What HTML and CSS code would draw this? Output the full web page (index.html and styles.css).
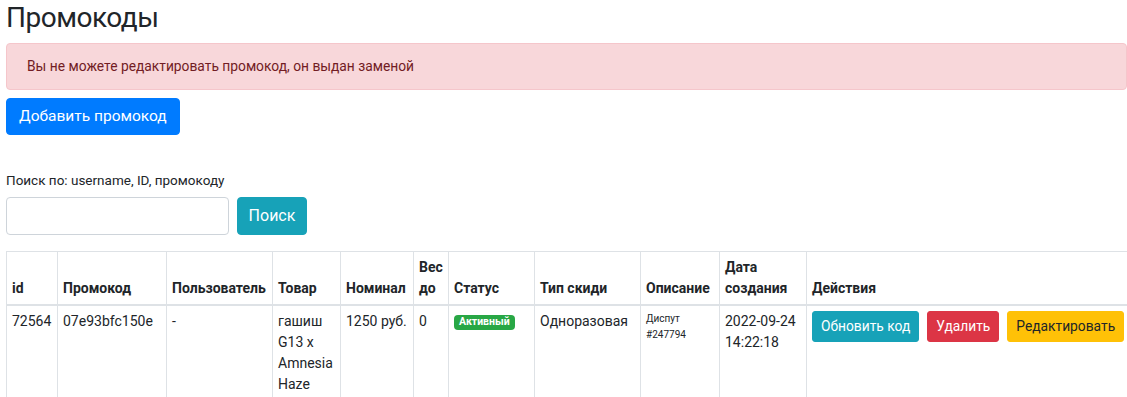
FILE: index.html
```html
<!DOCTYPE html>
<html lang="ru">
<head>
  <meta charset="UTF-8" />
  <title>Промокоды</title>
  <link rel="stylesheet" href="styles.css">
</head>
<body>
  <div class="page">
    <h1 class="page-title">Промокоды</h1>
    <div class="alert alert-danger">Вы не можете редактировать промокод, он выдан заменой</div>
    <button class="btn btn-primary btn-add" type="button">Добавить промокод</button>

    <form class="search" onsubmit="return false">
      <label class="search-label" for="q">Поиск по: username, ID, промокоду</label>
      <div class="search-row">
        <input type="text" id="q" class="search-input" />
        <button class="btn btn-info btn-search" type="submit">Поиск</button>
      </div>
    </form>

    <table class="promo-table">
      <colgroup>
        <col class="c-id"><col class="c-code"><col class="c-user"><col class="c-item">
        <col class="c-sum"><col class="c-weight"><col class="c-status"><col class="c-type">
        <col class="c-desc"><col class="c-date"><col>
      </colgroup>
      <thead>
        <tr>
          <th>id</th>
          <th>Промокод</th>
          <th>Пользователь</th>
          <th>Товар</th>
          <th>Номинал</th>
          <th>Вес<br>до</th>
          <th>Статус</th>
          <th>Тип скиди</th>
          <th>Описание</th>
          <th>Дата<br>создания</th>
          <th>Действия</th>
        </tr>
      </thead>
      <tbody>
        <tr>
          <td>72564</td>
          <td>07e93bfc150e</td>
          <td>-</td>
          <td class="wrap">гашиш G13 x Amnesia Haze</td>
          <td>1250 руб.</td>
          <td>0</td>
          <td><span class="badge badge-success">Активный</span></td>
          <td>Одноразовая</td>
          <td><small>Диспут<br>#247794</small></td>
          <td>2022-09-24<br>14:22:18</td>
          <td>
            <div class="actions">
              <button class="btn btn-sm btn-info" type="button">Обновить код</button>
              <button class="btn btn-sm btn-danger" type="button">Удалить</button>
              <button class="btn btn-sm btn-warning" type="button">Редактировать</button>
            </div>
          </td>
        </tr>
      </tbody>
    </table>
  </div>
</body>
</html>
```

FILE: styles.css
```css
:root {
  --text: #212529;
  --border: #dee2e6;
  --primary: #007bff;
  --info: #17a2b8;
  --danger: #dc3545;
  --warning: #ffc107;
  --success: #28a745;
}
html, body { margin: 0; padding: 0; background: #fff; }
body {
  font-family: Roboto, "Noto Sans", sans-serif;
  font-size: 14px;
  line-height: 1.5;
  color: var(--text);
  overflow: hidden;
}
.page {
  padding-left: 6px;
  width: 1121px;
}
.page-title {
  font-size: 28px;
  font-weight: 400;
  line-height: 36px;
  margin: 0 0 7px 0;
  letter-spacing: -0.5px;
}
.alert {
  padding: 12px 20px;
  border: 1px solid transparent;
  border-radius: 4px;
  margin-bottom: 8px;
}
.alert-danger {
  background: #f8d7da;
  border-color: #f5c6cb;
  color: #721c24;
  font-size: 13.8px;
}
.btn {
  display: inline-block;
  font-family: inherit;
  font-size: 16px;
  line-height: 1.5;
  padding: 6px 12px;
  border: 1px solid transparent;
  border-radius: 4px;
  color: #fff;
  cursor: pointer;
  white-space: nowrap;
}
.btn-primary { background: var(--primary); border-color: var(--primary); }
.btn-info { background: var(--info); border-color: var(--info); }
.btn-danger { background: var(--danger); border-color: var(--danger); }
.btn-warning { background: var(--warning); border-color: var(--warning); color: var(--text); }
.btn-add { font-size: 15.5px; }
.btn-sm {
  font-size: 13.8px;
  line-height: 21px;
  padding: 4px 8px;
  border-radius: 3px;
}
.search { margin-top: 35px; }
.search-label {
  display: block;
  font-size: 13.5px;
  margin-bottom: 7px;
}
.search-row {
  display: flex;
  gap: 8px;
  align-items: center;
}
.search-input {
  width: 223px;
  height: 38px;
  box-sizing: border-box;
  border: 1px solid #ced4da;
  border-radius: 4px;
  padding: 6px 12px;
  font-size: 16px;
}
.btn-search { height: 38px; width: 70px; padding: 0; }
.promo-table {
  margin-top: 16px;
  border-collapse: collapse;
  table-layout: fixed;
  width: 1124px;
  border: 1px solid var(--border);
}
.c-id { width: 51px; }
.c-code { width: 109px; }
.c-user { width: 106px; }
.c-item { width: 68px; }
.c-sum { width: 73px; }
.c-weight { width: 35px; }
.c-status { width: 86px; }
.c-type { width: 106px; }
.c-desc { width: 79px; }
.c-date { width: 87px; }
.promo-table th,
.promo-table td {
  border: 1px solid var(--border);
  padding: 5px;
  text-align: left;
  vertical-align: top;
  white-space: nowrap;
  font-size: 14px;
  line-height: 21px;
}
.promo-table td.wrap { white-space: normal; }
.promo-table thead th {
  vertical-align: bottom;
  border-bottom-width: 2px;
  font-weight: 700;
  color: var(--text);
}
.promo-table small {
  display: inline-block;
  font-size: 10px;
  line-height: 16px;
}
.badge {
  display: inline-block;
  font-size: 10.5px;
  font-weight: 700;
  line-height: 1;
  padding: 2px 5px;
  border-radius: 4px;
  vertical-align: 1px;
}
.badge-success { background: var(--success); color: #fff; }
.actions {
  display: flex;
  gap: 8px;
}
```
